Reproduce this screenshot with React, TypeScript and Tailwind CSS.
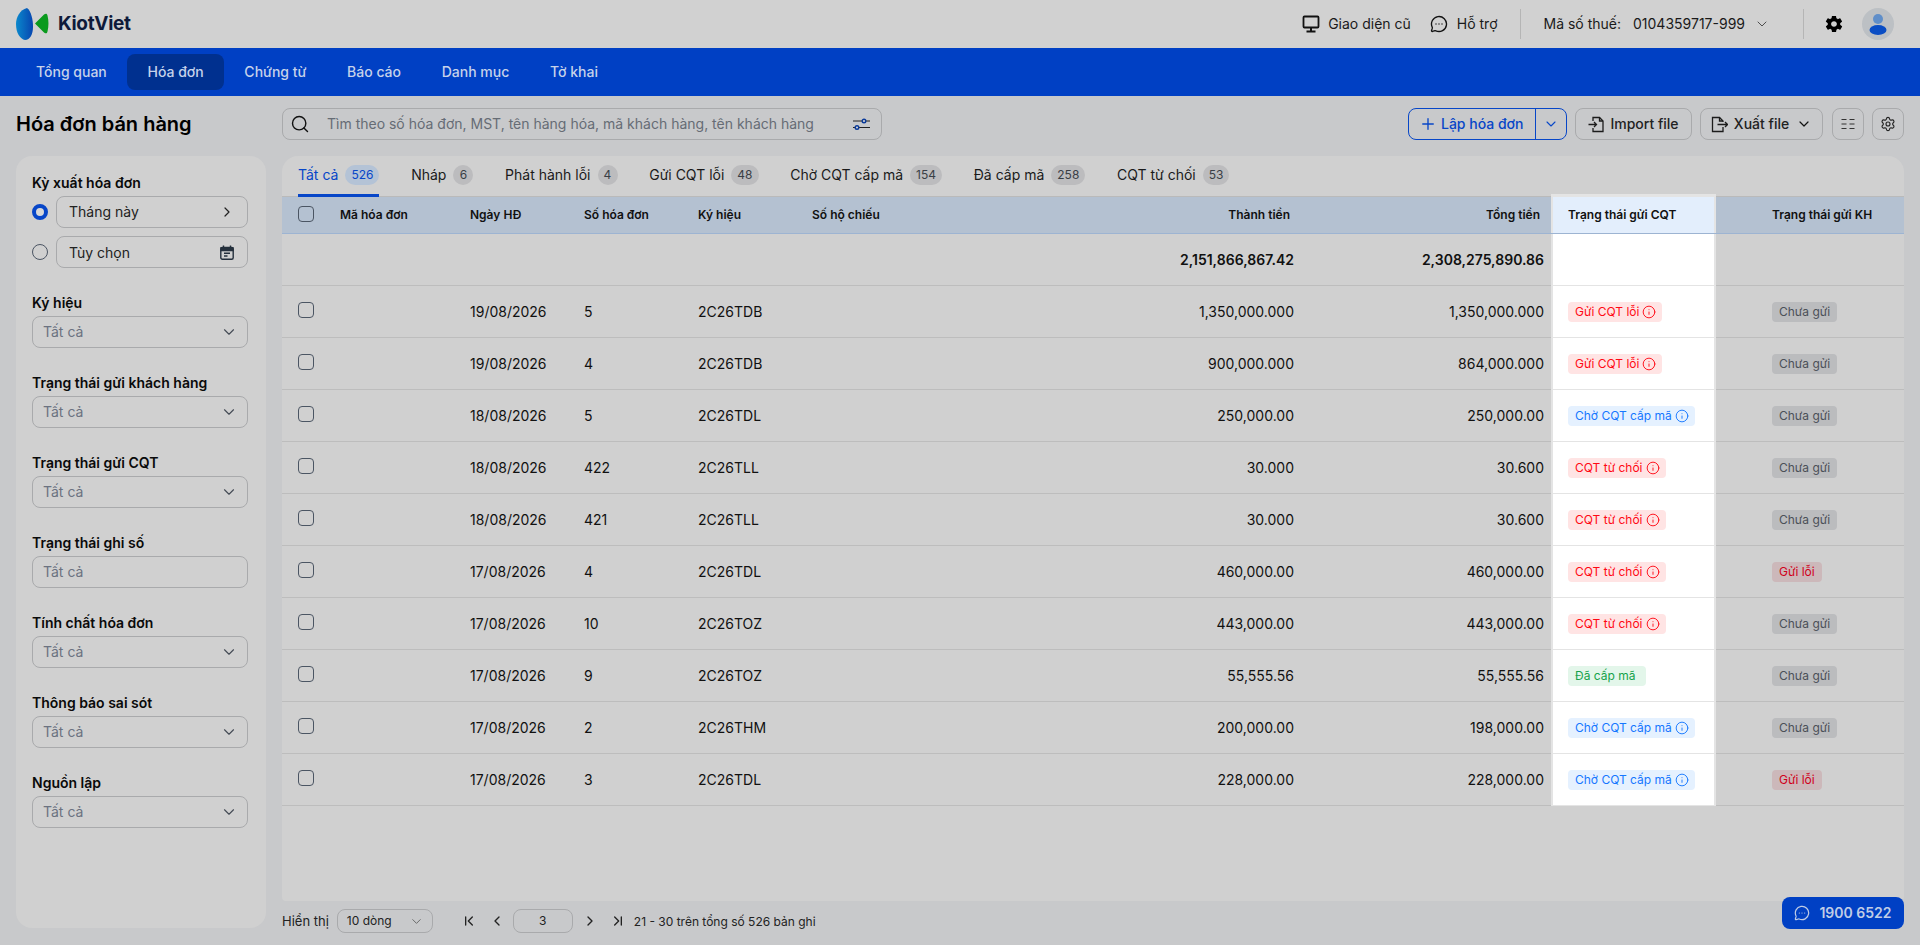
import {
  Search, ChevronRight, ChevronDown, ChevronLeft, MessageCircleMore,
  Plus, Settings, ChevronFirst, ChevronLast, Info,
} from 'lucide-react';
import { IoMdSettings } from 'react-icons/io';

const navItems = ['Tổng quan', 'Hóa đơn', 'Chứng từ', 'Báo cáo', 'Danh mục', 'Tờ khai'];

const tabs = [
  { label: 'Tất cả', count: '526' },
  { label: 'Nháp', count: '6' },
  { label: 'Phát hành lỗi', count: '4' },
  { label: 'Gửi CQT lỗi', count: '48' },
  { label: 'Chờ CQT cấp mã', count: '154' },
  { label: 'Đã cấp mã', count: '258' },
  { label: 'CQT từ chối', count: '53' },
];

const filters = ['Ký hiệu', 'Trạng thái gửi khách hàng', 'Trạng thái gửi CQT', 'Trạng thái ghi số', 'Tính chất hóa đơn', 'Thông báo sai sót', 'Nguồn lập'];

const rows = [
  ['19/08/2026', '5', '2C26TDB', '1,350,000.000', '1,350,000.000', 'loi', 'chua'],
  ['19/08/2026', '4', '2C26TDB', '900,000.000', '864,000.000', 'loi', 'chua'],
  ['18/08/2026', '5', '2C26TDL', '250,000.00', '250,000.00', 'cho', 'chua'],
  ['18/08/2026', '422', '2C26TLL', '30.000', '30.600', 'tuchoi', 'chua'],
  ['18/08/2026', '421', '2C26TLL', '30.000', '30.600', 'tuchoi', 'chua'],
  ['17/08/2026', '4', '2C26TDL', '460,000.00', '460,000.00', 'tuchoi', 'guiloi'],
  ['17/08/2026', '10', '2C26TOZ', '443,000.00', '443,000.00', 'tuchoi', 'chua'],
  ['17/08/2026', '9', '2C26TOZ', '55,555.56', '55,555.56', 'dacap', 'chua'],
  ['17/08/2026', '2', '2C26THM', '200,000.00', '198,000.00', 'cho', 'chua'],
  ['17/08/2026', '3', '2C26TDL', '228,000.00', '228,000.00', 'cho', 'guiloi'],
];

const gridCols = 'grid grid-cols-[42px_130px_114px_114px_114px_255px_250px_250px_165px_188px]';

function Checkbox() {
  return <span className="mb-[3px] block h-4 w-4 rounded-[4px] border border-[#4b5563]" />;
}

function StatusBadge({ kind }: { kind: string }) {
  if (kind === 'dacap') {
    return <span className="flex h-5 items-center rounded bg-[#e3f6ea] pl-[7px] pr-[11px] text-xs text-[#16a34a]">Đã cấp mã</span>;
  }
  const tone = kind === 'cho' ? 'bg-[#e5f1ff] text-[#1677ff]' : 'bg-[#ffe4e4] text-[#ff0a14]';
  const label = kind === 'cho' ? 'Chờ CQT cấp mã' : kind === 'loi' ? 'Gửi CQT lỗi' : 'CQT từ chối';
  return (
    <span className={`flex h-5 items-center gap-[3px] rounded pl-[7px] pr-[6px] text-xs ${tone}`}>
      {label}
      <Info size={14} strokeWidth={1.6} />
    </span>
  );
}

function SendBadge({ kind }: { kind: string }) {
  if (kind === 'guiloi') {
    return <span className="flex h-5 items-center rounded bg-[#ccb8ba] px-[7px] text-xs text-[#d0021b]">Gửi lỗi</span>;
  }
  return <span className="flex h-5 items-center rounded bg-[#bbbcbe] px-[7px] text-xs text-[#4b5058]">Chưa gửi</span>;
}

function SelectBox({ label }: { label: string }) {
  return (
    <div className="flex h-[80px] flex-col">
      <div className="flex h-[20px] items-center pt-px text-sm font-semibold text-[#0a0a0a]">{label}</div>
      <div className="mt-[4px] flex h-8 items-center justify-between rounded-lg border border-[#a9aaac] pl-[10px] pr-[9px] text-sm text-[#6b7280]">
        Tất cả
        {label !== 'Trạng thái ghi số' && <ChevronDown size={18} strokeWidth={1.5} className="text-[#444b55]" />}
      </div>
    </div>
  );
}

function Logo() {
  return (
    <div className="flex items-center">
      <svg width="33" height="34" viewBox="0 0 33 34">
        <defs>
          <linearGradient id="logoBlue" x1="0" x2="1" y1="0" y2="0">
            <stop offset="0" stopColor="#0a88cc" />
            <stop offset="1" stopColor="#0746b0" />
          </linearGradient>
        </defs>
        <path d="M11 1C4 3 0 10 0 17c0 9 4 15 9 16 5 0 8-6 8-13C17 12 15 4 11 1Z" fill="url(#logoBlue)" />
        <path d="M19 16.5 28 7.5c2-1.5 3-1 3.500 1 1.300 5 1.300 11 0 16-.5 2-1.500 2.500-3.500 1Z" fill="#0a9a1e" />
      </svg>
      <span className="ml-[9px] text-[19px] font-bold tracking-[-0.3px] text-[#0e1a3a]">KiotViet</span>
    </div>
  );
}

export default function App() {
  return (
    <div className="relative h-[945px] w-full overflow-hidden bg-[#c8c9cb] font-['Inter',sans-serif] text-[#111111]">
      <header className="flex h-12 items-center justify-between bg-[#d1d1d1] pl-4 pr-[26px]">
        <Logo />
        <div className="flex items-center text-sm text-[#1a1a1a]">
          <svg width="18" height="18" viewBox="0 0 18 18" fill="none" stroke="#111" strokeWidth="1.8">
            <rect x="1.500" y="1.500" width="15" height="11" rx="1" />
            <path d="M9 13v3M4.500 16.500h9" strokeWidth="2" />
          </svg>
          <span className="ml-2">Giao diện cũ</span>
          <MessageCircleMore size={18} strokeWidth={1.8} className="ml-[19px] text-[#111]" />
          <span className="ml-[9px]">Hỗ trợ</span>
          <div className="ml-[22px] h-[30px] w-px bg-[#b5b5b5]" />
          <span className="ml-[23px]">Mã số thuế:</span>
          <span className="ml-3">0104359717-999</span>
          <ChevronDown size={16} strokeWidth={1.4} className="ml-[9px] text-[#444]" />
          <div className="ml-[33px] h-[30px] w-px bg-[#b5b5b5]" />
          <IoMdSettings size={20} className="ml-5 text-black" />
          <div className="ml-[18px] flex h-8 w-8 flex-col items-center justify-center rounded-full bg-[#bcc0c4]">
            <svg width="18" height="22" viewBox="0 0 18 22">
              <circle cx="9" cy="6" r="5" fill="#5f8ec9" />
              <ellipse cx="9" cy="17" rx="8.500" ry="5" fill="#0a4dc4" />
            </svg>
          </div>
        </div>
      </header>

      <nav className="flex h-12 items-center gap-[0.7px] bg-[#0040c4] pl-4">
        {navItems.map((item) => (
          <div
            key={item}
            className={`flex h-9 items-center rounded-lg px-5 text-sm font-medium text-[#c6d2ea] ${item === 'Hóa đơn' ? 'bg-[#00308f]' : ''}`}
          >
            {item}
          </div>
        ))}
      </nav>

      <div className="flex gap-4 px-4 pt-3">
        <aside className="w-[250px] shrink-0">
          <h1 className="flex h-8 items-center text-[20px] font-semibold text-black">Hóa đơn bán hàng</h1>
          <div className="mt-4 h-[772px] rounded-2xl bg-[#d0d0d0] pl-4 pr-[18px] pt-4">
            <div className="flex h-[20px] items-center pt-px text-sm font-semibold text-[#0a0a0a]">Kỳ xuất hóa đơn</div>
            <div className="mt-1 flex flex-col gap-2">
              <div className="flex items-center gap-2">
                <span className="h-4 w-4 shrink-0 rounded-full border-[4px] border-[#0746c8] bg-[#d8d8d8]" />
                <div className="flex h-8 flex-1 items-center justify-between rounded-lg border border-[#a9aaac] pl-3 pr-3 text-sm text-[#222]">
                  Tháng này
                  <ChevronRight size={16} strokeWidth={1.8} />
                </div>
              </div>
              <div className="flex items-center gap-2">
                <span className="h-4 w-4 shrink-0 rounded-full border border-[#4b5563]" />
                <div className="flex h-8 flex-1 items-center justify-between rounded-lg border border-[#a9aaac] pl-3 pr-[13px] text-sm text-[#222]">
                  <span className="pt-px">Tùy chọn</span>
                  <svg width="14" height="15" viewBox="0 0 14 15" fill="none" stroke="#25303d" strokeWidth="1.4">
                    <rect x="0.800" y="2.500" width="12.400" height="11.800" rx="1.500" />
                    <path d="M1 3h12v2.600H1z" fill="#25303d" />
                    <path d="M3.500 0.500v2M10.500 0.500v2M4 8.200h6M4 11h3.500" />
                  </svg>
                </div>
              </div>
            </div>
            <div className="mt-6 flex flex-col">
              {filters.map((f) => (
                <SelectBox key={f} label={f} />
              ))}
            </div>
          </div>
        </aside>

        <main className="min-w-0 flex-1">
          <div className="flex h-8 items-center justify-between">
            <div className="flex h-8 w-[600px] items-center rounded-lg border border-[#a9aaac] pl-[7px] pr-[11px]">
              <Search size={20} strokeWidth={1.7} className="text-[#111]" />
              <span className="ml-[17px] flex-1 text-sm text-[#666c75]">Tìm theo số hóa đơn, MST, tên hàng hóa, mã khách hàng, tên khách hàng</span>
              <svg width="18" height="12" viewBox="0 0 18 12" fill="none" stroke="#222" strokeWidth="1.200">
                <path d="M1 3h17M1 9.500h17" />
                <circle cx="12" cy="3" r="1.800" fill="#d0d0d0" stroke="#0a3a9a" strokeWidth="1.400" />
                <circle cx="5" cy="9.500" r="1.800" fill="#d0d0d0" stroke="#0a3a9a" strokeWidth="1.400" />
              </svg>
            </div>
            <div className="flex items-center gap-2">
              <div className="flex h-8 w-[159px] items-center rounded-lg border border-[#0746c8] text-sm font-medium text-[#0746c8]">
                <div className="flex flex-1 items-center gap-1 pl-[10px]">
                  <Plus size={18} strokeWidth={1.8} />
                  Lập hóa đơn
                </div>
                <div className="flex h-full w-[31px] items-center justify-center border-l border-[#0746c8]">
                  <ChevronDown size={16} strokeWidth={1.6} />
                </div>
              </div>
              <div className="flex h-8 w-[117px] items-center justify-center gap-[5px] rounded-lg border border-[#a9aaac] text-sm font-medium text-[#222]">
                <svg width="17" height="17" viewBox="0 0 17 17" fill="none" stroke="#1c1c1c" strokeWidth="1.300">
                  <path d="M5 5V1.500h6.500l3.500 3.500v10.500H5V12" />
                  <path d="M11.500 1.500V5H15M0.500 8.500h8M6 6l2.500 2.500L6 11" />
                </svg>
                Import file
              </div>
              <div className="flex h-8 w-[123px] items-center justify-center gap-[6px] rounded-lg border border-[#a9aaac] text-sm font-medium text-[#222]">
                <svg width="17" height="17" viewBox="0 0 17 17" fill="none" stroke="#1c1c1c" strokeWidth="1.300">
                  <path d="M12 6V5L8.500 1.500H1.500v14h10.500V11" />
                  <path d="M8.500 1.500V5H12M6.500 8.500h10M14 6l2.500 2.500L14 11" />
                </svg>
                Xuất file
                <ChevronDown size={16} strokeWidth={1.8} className="ml-[1px] text-[#111]" />
              </div>
              <div className="ml-px flex h-8 w-8 items-center justify-center rounded-lg border border-[#a9aaac]">
                <svg width="14" height="12" viewBox="0 0 14 12" stroke="#333" strokeWidth="1.200">
                  <path d="M0.500 1.500h5M8.500 1.500h5M0.500 6h5M8.500 6h5M0.500 10.500h5M8.500 10.500h5" />
                </svg>
              </div>
              <div className="flex h-8 w-8 items-center justify-center rounded-lg border border-[#a9aaac]">
                <Settings size={16} strokeWidth={1.7} className="text-[#222]" />
              </div>
            </div>
          </div>

          <div className="mt-4 h-[745px] rounded-t-2xl rounded-b-sm bg-[#d0d0d0]">
            <div className="flex h-[41px] items-stretch border-b border-[#bababa]">
              <div className="flex pl-[16px]">
                {tabs.map((t, i) => (
                  <div
                    key={t.label}
                    className={`relative mr-[31.7px] flex h-[40px] items-center gap-[7px] pb-[2px] text-sm ${i === 0 ? 'text-[#0746c8]' : 'text-[#1a1a1a]'}`}
                  >
                    {t.label}
                    <span className={`flex h-5 min-w-5 items-center justify-center rounded-full px-[6px] text-xs ${i === 0 ? 'bg-[#b4c3d6] text-[#0746c8]' : 'bg-[#bcbcbe] text-[#3a3f46]'}`}>
                      {t.count}
                    </span>
                    {i === 0 && <span className="absolute bottom-[-1px] left-0 right-0 h-[3px] bg-[#0746c8]" />}
                  </div>
                ))}
              </div>
            </div>

            <div className={`${gridCols} h-[37px] border-b border-[#9db4d2] bg-[#b4c1d1] text-xs font-semibold text-[#111]`}>
              <div className="flex items-center pl-4"><Checkbox /></div>
              <div className="flex items-center pl-4">Mã hóa đơn</div>
              <div className="flex items-center pl-4">Ngày HĐ</div>
              <div className="flex items-center pl-4">Số hóa đơn</div>
              <div className="flex items-center pl-4">Ký hiệu</div>
              <div className="flex items-center pl-4">Số hộ chiếu</div>
              <div className="flex items-center justify-end pr-[11px]">Thành tiền</div>
              <div className="flex items-center justify-end pr-[11px]">Tổng tiền</div>
              <div className="flex items-center border-x-2 border-[#e4e4e4] bg-[#e3eefc] pl-[15px] shadow-[0_-3px_0_#e4e4e4]">Trạng thái gửi CQT</div>
              <div className="flex items-center pl-14">Trạng thái gửi KH</div>
            </div>

            <div className={`${gridCols} h-[52px] border-b border-[#bdbdbd] text-sm font-semibold text-[#111]`}>
              <div className="col-span-6" />
              <div className="flex items-center justify-end pr-[7px]">2,151,866,867.42</div>
              <div className="flex items-center justify-end pr-[7px]">2,308,275,890.86</div>
              <div className="border-x-2 border-[#e4e4e4] bg-white shadow-[0_1px_0_#e4e4e4]" />
              <div />
            </div>

            {rows.map((r, i) => (
              <div key={i} className={`${gridCols} h-[52px] border-b border-[#bdbdbd] text-sm text-[#111]`}>
                <div className="flex items-center pl-4"><Checkbox /></div>
                <div />
                <div className="flex items-center pl-4">{r[0]}</div>
                <div className="flex items-center pl-4">{r[1]}</div>
                <div className="flex items-center pl-4">{r[2]}</div>
                <div />
                <div className="flex items-center justify-end pr-[7px]">{r[3]}</div>
                <div className="flex items-center justify-end pr-[7px]">{r[4]}</div>
                <div className="flex items-center border-x-2 border-[#e4e4e4] bg-white pl-[15px] shadow-[0_1px_0_#e4e4e4]">
                  <StatusBadge kind={r[5]} />
                </div>
                <div className="flex items-center pl-14">
                  <SendBadge kind={r[6]} />
                </div>
              </div>
            ))}
          </div>

          <div className="mt-2 flex h-6 items-center text-[13px] text-[#222]">
            <span className="pt-px">Hiển thị</span>
            <div className="ml-[8px] flex h-6 w-[96px] items-center justify-between rounded-lg border border-[#a9aaac] pl-[9px] pr-2 text-xs">
              10 dòng
              <ChevronDown size={15} strokeWidth={1.3} className="text-[#555]" />
            </div>
            <ChevronFirst size={16} strokeWidth={2} className="ml-[28px]" />
            <ChevronLeft size={16} strokeWidth={2} className="ml-[12px]" />
            <div className="ml-[8px] flex h-6 w-[60px] items-center justify-center rounded-lg border border-[#a9aaac] text-xs">3</div>
            <ChevronRight size={16} strokeWidth={2} className="ml-[9px]" />
            <ChevronLast size={16} strokeWidth={2} className="ml-[12px]" />
            <span className="ml-2 pt-px text-xs">21 - 30 trên tổng số 526 bản ghi</span>
          </div>
        </main>
      </div>

      <div className="absolute bottom-4 right-4 flex h-8 w-[122px] items-center justify-center gap-[9px] rounded-lg bg-[#0040c4] text-sm font-semibold text-[#c0cde6]">
        <MessageCircleMore size={16} strokeWidth={1.8} />
        1900 6522
      </div>
    </div>
  );
}
